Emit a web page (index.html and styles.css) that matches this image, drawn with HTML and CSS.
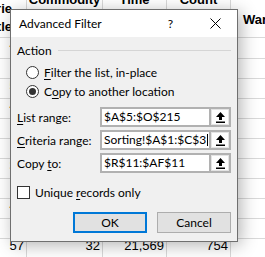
FILE: index.html
```html
<!DOCTYPE html>
<html lang="en">
<head>
    <meta charset="UTF-8">
    <meta name="viewport" content="width=device-width, initial-scale=1.0">
    <title>Advanced Filter</title>
    <link rel="stylesheet" href="styles.css">
</head>
<body>
    <!-- Worksheet behind the dialog -->
    <div class="sheet">
        <div class="cell head first">Serie<br>Title</div>
        <div class="cell head"><span class="lift">Commodity<br>Code</span></div>
        <div class="cell head"><span class="lift">Time<br>Period</span></div>
        <div class="cell head"><span class="lift">Count<br>Total</span></div>
        <div class="cell head wa">Warehouse</div>

        <div class="cell num">48</div><div class="cell num">12</div><div class="cell num">18,220</div><div class="cell num">611</div><div class="cell"></div>
        <div class="cell num">9</div><div class="cell num">27</div><div class="cell num">4,105</div><div class="cell num">93</div><div class="cell"></div>
        <div class="cell num">51</div><div class="cell num">8</div><div class="cell num">12,876</div><div class="cell num">402</div><div class="cell"></div>
        <div class="cell num">43</div><div class="cell num">19</div><div class="cell num">9,341</div><div class="cell num">287</div><div class="cell"></div>
        <div class="cell num">6</div><div class="cell num">41</div><div class="cell num">2,990</div><div class="cell num">58</div><div class="cell"></div>
        <div class="cell num">7</div><div class="cell num">23</div><div class="cell num">7,412</div><div class="cell num">160</div><div class="cell"></div>
        <div class="cell num">38</div><div class="cell num">15</div><div class="cell num">15,034</div><div class="cell num">519</div><div class="cell"></div>
        <div class="cell num">2</div><div class="cell num">36</div><div class="cell num">6,778</div><div class="cell num">205</div><div class="cell"></div>
        <div class="cell num">44</div><div class="cell num">11</div><div class="cell num">19,660</div><div class="cell num">688</div><div class="cell"></div>
        <div class="cell num">5</div><div class="cell num">29</div><div class="cell num">3,217</div><div class="cell num">74</div><div class="cell"></div>
        <div class="cell num">57</div><div class="cell num">32</div><div class="cell num">21,569</div><div class="cell num">754</div><div class="cell"></div>
    </div>

    <!-- Advanced Filter dialog -->
    <div class="dialog">
        <div class="titlebar">
            <span class="title">Advanced Filter</span>
            <span class="help">?</span>
            <svg class="close" width="11" height="11" viewBox="0 0 11 11">
                <path d="M0.5 0.5 L10.5 10.5 M10.5 0.5 L0.5 10.5" stroke="#000" stroke-width="1" fill="none"/>
            </svg>
        </div>

        <div class="dialog-body">
            <div class="group-head">
                <span>Action</span>
                <span class="rule"></span>
            </div>
            <div class="option">
                <span class="radio"></span>
                <span><u>F</u>ilter the list, in-place</span>
            </div>
            <div class="option">
                <span class="radio checked"></span>
                <span>C<u>o</u>py to another location</span>
            </div>

            <div class="fields">
                <div class="field-row">
                    <span class="field-label"><u>L</u>ist range:</span>
                    <div class="field">
                        <span class="field-text">$A$5:$O$215</span>
                        <span class="field-btn">
                            <svg width="9" height="11" viewBox="0 0 9 11"><path d="M4.5 0 L9 5 L6 5 L6 8 L3 8 L3 5 L0 5 Z M0 9.5 H9 V11 H0 Z" fill="#000"/></svg>
                        </span>
                    </div>
                </div>
                <div class="field-row">
                    <span class="field-label"><u>C</u>riteria range:</span>
                    <div class="field">
                        <span class="field-text">Sorting!$A$1:$C$3<span class="caret"></span></span>
                        <span class="field-btn">
                            <svg width="9" height="11" viewBox="0 0 9 11"><path d="M4.5 0 L9 5 L6 5 L6 8 L3 8 L3 5 L0 5 Z M0 9.5 H9 V11 H0 Z" fill="#000"/></svg>
                        </span>
                    </div>
                </div>
                <div class="field-row">
                    <span class="field-label">Copy <u>t</u>o:</span>
                    <div class="field">
                        <span class="field-text">$R$11:$AF$11</span>
                        <span class="field-btn">
                            <svg width="9" height="11" viewBox="0 0 9 11"><path d="M4.5 0 L9 5 L6 5 L6 8 L3 8 L3 5 L0 5 Z M0 9.5 H9 V11 H0 Z" fill="#000"/></svg>
                        </span>
                    </div>
                </div>
            </div>

            <div class="check-row">
                <span class="checkbox"></span>
                <span>Unique <u>r</u>ecords only</span>
            </div>

            <div class="buttons">
                <button class="btn default">OK</button>
                <button class="btn">Cancel</button>
            </div>
        </div>
    </div>
</body>
</html>
```

FILE: styles.css
```css
body {
    margin: 0;
    background-color: #fff;
    overflow: hidden;
    font-family: "Liberation Sans", Arial, sans-serif;
}

/* worksheet grid */
.sheet {
    display: grid;
    grid-template-columns: 57px 76px 64px 64px 120px;
    grid-template-rows: 38px 21px repeat(10, 20px);
    margin-left: -30px;
    font-size: 13px;
    color: #000;
}

.cell {
    box-sizing: border-box;
    border-right: 1px solid #d9d9d9;
    border-bottom: 1px solid #d9d9d9;
    overflow: hidden;
    white-space: nowrap;
    line-height: 14px;
}

.num {
    text-align: right;
    padding-right: 2px;
}

.head {
    font-weight: bold;
    line-height: 18px;
    text-align: center;
}

.head.first {
    text-align: right;
    padding-right: 14px;
}

.head .lift {
    display: block;
    margin-top: -9px;
}

.head.wa {
    text-align: left;
    padding-left: 12px;
    padding-top: 11px;
}

/* dialog */
.dialog {
    position: absolute;
    left: 10px;
    top: 9px;
    width: 228px;
    height: 233px;
    box-sizing: border-box;
    border: 1px solid #6f6f6f;
    background-color: #f0f0f0;
    box-shadow: 3px 3px 16px rgba(0, 0, 0, 0.3);
    font-family: Lato, "Open Sans", sans-serif;
    font-size: 12px;
    color: #000;
    display: flex;
    flex-direction: column;
}

.titlebar {
    height: 27px;
    background-color: #fff;
    display: flex;
    align-items: center;
    padding-left: 8px;
}

.title {
    flex: 1;
}

.help {
    margin-right: 37px;
}

.close {
    margin-right: 16px;
}

.dialog-body {
    padding: 0 6px;
    display: flex;
    flex-direction: column;
}

.group-head {
    height: 26px;
    display: flex;
    align-items: center;
    gap: 6px;
}

.rule {
    flex: 1;
    height: 1px;
    background-color: #d5d5d5;
}

.option {
    height: 19px;
    display: flex;
    align-items: center;
    gap: 5px;
    padding-left: 9px;
}

.radio {
    width: 13px;
    height: 13px;
    box-sizing: border-box;
    border: 1px solid #333;
    border-radius: 50%;
    background-color: #fff;
    display: flex;
    align-items: center;
    justify-content: center;
}

.radio.checked::after {
    content: "";
    width: 7px;
    height: 7px;
    border-radius: 50%;
    background-color: #333;
}

.fields {
    margin-top: 6px;
    display: flex;
    flex-direction: column;
    gap: 3px;
}

.field-row {
    display: flex;
    align-items: center;
    height: 20px;
}

.field-label {
    width: 83px;
}

.field {
    flex: 1;
    height: 20px;
    box-sizing: border-box;
    border: 2px solid #b1b1b1;
    display: flex;
}

.field-text {
    flex: 1;
    background-color: #fff;
    padding-left: 2px;
    line-height: 16px;
}

.caret {
    display: inline-block;
    width: 1px;
    height: 12px;
    background-color: #000;
    vertical-align: -2px;
    margin-left: 1px;
}

.field-btn {
    width: 20px;
    box-sizing: border-box;
    border-left: 2px solid #b1b1b1;
    background-color: #fdfdfd;
    box-shadow: inset 0 0 0 1px #e3e3e3;
    display: flex;
    align-items: center;
    justify-content: center;
}

.check-row {
    margin-top: 10px;
    height: 19px;
    display: flex;
    align-items: center;
    gap: 5px;
}

.checkbox {
    width: 13px;
    height: 13px;
    box-sizing: border-box;
    border: 1px solid #333;
    background-color: #fff;
}

.buttons {
    margin-top: 10px;
    display: flex;
    justify-content: flex-end;
    gap: 10px;
}

.btn {
    width: 74px;
    height: 21px;
    box-sizing: border-box;
    border: 1px solid #adadad;
    background-color: #e1e1e1;
    font-family: inherit;
    font-size: 12px;
    color: #000;
    padding: 0;
}

.btn.default {
    border: 2px solid #0078d7;
}

u {
    text-underline-offset: 2px;
}
```
